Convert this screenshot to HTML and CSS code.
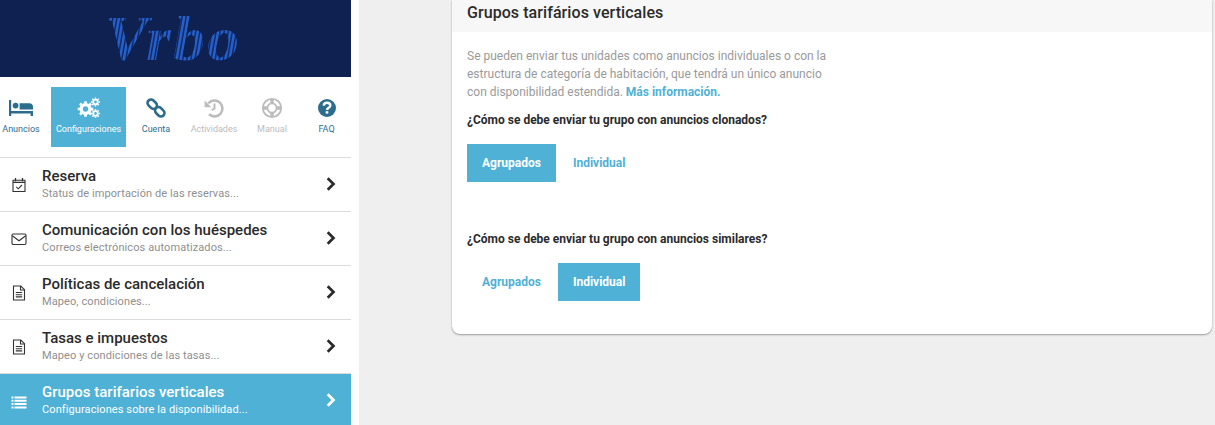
FILE: index.html
```html
<!DOCTYPE html>
<html lang="es">
<head>
<meta charset="utf-8">
<title>Grupos tarifarios verticales</title>
<link rel="stylesheet" href="styles.css">
</head>
<body>
<div class="app">
  <aside class="sidebar">
    <div class="brand"><span class="brand-logo">Vrbo</span></div>
    <nav class="tabs">
      <a class="tab tab-anuncios">
        <svg class="tab-icon" width="26" height="20" viewBox="0 0 26 20"><path fill="currentColor" d="M1 2h2.200v11H25v5h-2.400v-2.600H3.200V18H1z"/><circle cx="7.600" cy="7.600" r="2.900" fill="currentColor"/><path fill="currentColor" d="M11.600 5.200h9.600a3.800 3.800 0 0 1 3.800 3.800v2.600H11.600z"/></svg>
        <span>Anuncios</span>
      </a>
      <a class="tab tab-config active">
        <svg class="tab-icon" width="24" height="22" viewBox="0 0 24 22" fill="none" stroke="currentColor"><circle cx="8.500" cy="12" r="4.400" stroke-width="3.400"/><path stroke-width="2.600" d="M8.500 4.200v2.200M8.500 17.600v2.200M.7 12h2.200M14.100 12h2.200M3 6.500l1.600 1.600M12.400 15.900l1.600 1.600M3 17.500l1.600-1.600M12.400 8.100L14 6.500"/><circle cx="18.500" cy="5" r="2.300" stroke-width="1.800"/><path stroke-width="1.500" d="M18.500.4v1.400M18.500 8.200v1.400M13.900 5h1.400M21.700 5h1.400M15.300 1.800l1 1M20.700 7.200l1 1M15.300 8.200l1-1M20.700 2.800l1-1"/><circle cx="18.500" cy="16.500" r="2.300" stroke-width="1.800"/><path stroke-width="1.500" d="M18.500 11.900v1.400M18.500 19.700v1.400M13.900 16.500h1.400M21.700 16.500h1.400M15.300 13.300l1 1M20.700 18.700l1 1M15.300 19.700l1-1M20.700 14.300l1-1"/></svg>
        <span>Configuraciones</span>
      </a>
      <a class="tab tab-cuenta">
        <svg class="tab-icon" width="22" height="22" viewBox="0 0 22 22" fill="none" stroke="currentColor" stroke-width="2.600"><rect x="2" y="3.700" width="10.500" height="7" rx="3.500" transform="rotate(45 7.250 7.200)"/><rect x="9.500" y="11.300" width="10.500" height="7" rx="3.500" transform="rotate(45 14.750 14.800)"/></svg>
        <span>Cuenta</span>
      </a>
      <a class="tab tab-actividades muted">
        <svg class="tab-icon" width="20" height="20" viewBox="0 0 20 20" fill="none" stroke="currentColor" stroke-width="2.600"><path d="M4.300 5.300A8 8 0 1 1 5 16.300"/><path d="M10.500 5.500v5l-2.800 1.600" stroke-width="2"/><path fill="currentColor" stroke="none" d="M.6 2.400v6.800h6.800z"/></svg>
        <span>Actividades</span>
      </a>
      <a class="tab tab-manual muted">
        <svg class="tab-icon" width="22" height="22" viewBox="0 0 22 22" fill="none" stroke="currentColor"><circle cx="11" cy="11" r="9.200" stroke-width="1.800"/><circle cx="11" cy="11" r="4.600" stroke-width="1.800"/><path stroke-width="3.400" d="M11 2v4.500M11 15.500V20M2 11h4.500M15.500 11H20"/></svg>
        <span>Manual</span>
      </a>
      <a class="tab tab-faq">
        <svg class="tab-icon" width="20" height="20" viewBox="0 0 20 20"><circle cx="10" cy="10" r="9" fill="currentColor"/><path fill="none" stroke="#fff" stroke-width="2.400" d="M6.700 7.600C6.900 5.600 8.300 4.700 10 4.700c2 0 3.300 1.100 3.300 2.700 0 2.400-3.300 2.300-3.300 4.700"/><rect x="8.700" y="13.200" width="2.600" height="2.400" fill="#fff"/></svg>
        <span>FAQ</span>
      </a>
    </nav>
    <ul class="menu">
      <li class="menu-item">
        <svg class="menu-icon" width="16" height="16" viewBox="0 0 16 16" fill="none" stroke="currentColor" stroke-width="1.100"><path d="M2 3.200h12v11.300H2z"/><path d="M4.500 1v3.300M11.500 1v3.300M2 5.400h12" stroke-width="1.300"/><path d="M5.300 9.800l2 2 3.600-3.800"/></svg>
        <div class="menu-text"><div class="menu-title">Reserva</div><div class="menu-sub">Status de importación de las reservas...</div></div>
        <svg class="chevron" width="10" height="14" viewBox="0 0 10 14"><path fill="none" stroke="currentColor" stroke-width="2.700" d="M1.700 1.200 7.500 7l-5.800 5.800"/></svg>
      </li>
      <li class="menu-item">
        <svg class="menu-icon" width="16" height="16" viewBox="0 0 16 16" fill="none" stroke="currentColor" stroke-width="1.100"><rect x="1" y="3" width="14" height="10.500" rx="1.200"/><path d="M1.300 4.800 8 9.800l6.700-5"/></svg>
        <div class="menu-text"><div class="menu-title">Comunicación con los huéspedes</div><div class="menu-sub">Correos electrónicos automatizados...</div></div>
        <svg class="chevron" width="10" height="14" viewBox="0 0 10 14"><path fill="none" stroke="currentColor" stroke-width="2.700" d="M1.700 1.200 7.500 7l-5.800 5.800"/></svg>
      </li>
      <li class="menu-item">
        <svg class="menu-icon" width="16" height="16" viewBox="0 0 16 16" fill="none" stroke="currentColor" stroke-width="1.100"><path d="M2.500 1h7.300l3.700 3.700v10.300h-11z"/><path d="M9.500 1v4h4M4.800 7.500h6.400M4.800 9.700h6.400M4.800 11.900h6.400"/></svg>
        <div class="menu-text"><div class="menu-title">Políticas de cancelación</div><div class="menu-sub">Mapeo, condiciones...</div></div>
        <svg class="chevron" width="10" height="14" viewBox="0 0 10 14"><path fill="none" stroke="currentColor" stroke-width="2.700" d="M1.700 1.200 7.500 7l-5.800 5.800"/></svg>
      </li>
      <li class="menu-item">
        <svg class="menu-icon" width="16" height="16" viewBox="0 0 16 16" fill="none" stroke="currentColor" stroke-width="1.100"><path d="M2.500 1h7.300l3.700 3.700v10.300h-11z"/><path d="M9.500 1v4h4M4.800 7.500h6.400M4.800 9.700h6.400M4.800 11.900h6.400"/></svg>
        <div class="menu-text"><div class="menu-title">Tasas e impuestos</div><div class="menu-sub">Mapeo y condiciones de las tasas...</div></div>
        <svg class="chevron" width="10" height="14" viewBox="0 0 10 14"><path fill="none" stroke="currentColor" stroke-width="2.700" d="M1.700 1.200 7.500 7l-5.800 5.800"/></svg>
      </li>
      <li class="menu-item selected">
        <svg class="menu-icon" width="16" height="16" viewBox="0 0 16 16" fill="currentColor"><path d="M.5 2.500h2v2h-2zM3.500 2.500h12v2h-12zM.5 5.800h2v2h-2zM3.500 5.800h12v2h-12zM.5 9.100h2v2h-2zM3.500 9.100h12v2h-12zM.5 12.400h2v2h-2zM3.500 12.400h12v2h-12z"/></svg>
        <div class="menu-text"><div class="menu-title">Grupos tarifarios verticales</div><div class="menu-sub">Configuraciones sobre la disponibilidad...</div></div>
        <svg class="chevron" width="10" height="14" viewBox="0 0 10 14"><path fill="none" stroke="currentColor" stroke-width="2.700" d="M1.700 1.200 7.500 7l-5.800 5.800"/></svg>
      </li>
    </ul>
  </aside>
  <main class="content">
    <section class="card">
      <header class="card-header">Grupos tarifários verticales</header>
      <div class="card-body">
        <p class="intro">Se pueden enviar tus unidades como anuncios individuales o con la estructura de categoría de habitación, que tendrá un único anuncio con disponibilidad estendida. <a class="more">Más información.</a></p>
        <div class="question">¿Cómo se debe enviar tu grupo con anuncios clonados?</div>
        <div class="choices">
          <button class="choice on">Agrupados</button>
          <button class="choice">Individual</button>
        </div>
        <div class="question second">¿Cómo se debe enviar tu grupo con anuncios similares?</div>
        <div class="choices">
          <button class="choice">Agrupados</button>
          <button class="choice on">Individual</button>
        </div>
      </div>
    </section>
  </main>
</div>
</body>
</html>
```
FILE: styles.css
```css
* { box-sizing: border-box; }
html, body { margin: 0; height: 100%; overflow: hidden; }
body { font-family: Roboto, "Liberation Sans", sans-serif; background: #efefef; color: #2b2b2b; }
.app { display: flex; height: 425px; }

.sidebar { width: 359px; flex: none; background: #fff; padding-right: 8px; height: 425px; overflow: hidden; }
.brand { height: 77px; background: #0e2151; display: flex; align-items: center; justify-content: center; padding-right: 5px; }
.brand-logo {
  font: italic 700 64px/66px "Liberation Serif", serif;
  letter-spacing: 2px;
  width: 146px;
  text-align: center;
  background: repeating-linear-gradient(100deg, #2560c8 0, #2560c8 1.5px, #12296a 2.5px, #12296a 3px, #2560c8 4px);
  -webkit-background-clip: text;
  background-clip: text;
  color: transparent;
}

.tabs { height: 81px; border-bottom: 1px solid #dcdcdc; display: flex; align-items: flex-start; padding-top: 10px; }
.tab { height: 60px; display: flex; flex-direction: column; align-items: center; color: #2c6d8e; font-size: 9px; font-weight: 400; white-space: nowrap; }
.tab-icon { height: 22px; margin-top: 10px; margin-bottom: 5px; flex: none; }
.tab-anuncios { width: 51px; padding-right: 9px; }
.tab-config { width: 75px; }
.tab-cuenta { width: 60px; }
.tab-actividades { width: 56px; }
.tab-manual { width: 60px; }
.tab-faq { width: 49px; }
.tab.active { background: #4fb1d6; color: #fff; }
.tab.muted { color: #bcbcbc; }

.menu { list-style: none; margin: 0; padding: 0; }
.menu-item { height: 54px; border-bottom: 1px solid #dcdcdc; display: flex; align-items: center; padding: 0 15px 0 11px; color: #2b2b2b; }
.menu-icon { flex: none; margin-right: 15px; margin-top: 1px; color: #333; }
.menu-text { flex: 1; min-width: 0; padding-bottom: 2px; }
.menu-title { font-size: 15px; font-weight: 500; line-height: 18px; }
.menu-sub { font-size: 11px; line-height: 14px; color: #8f8f8f; margin-top: 2px; letter-spacing: .1px; }
.chevron { flex: none; color: #2b2b2b; margin-bottom: 2px; }
.menu-item.selected { background: #4fb1d6; color: #fff; border-bottom: 0; }
.menu-item.selected .menu-icon, .menu-item.selected .menu-sub, .menu-item.selected .chevron { color: #fff; }

.content { flex: 1; min-width: 0; padding: 0 3px 0 93px; }
.card { background: #fff; border-radius: 0 0 8px 8px; box-shadow: 0 1px 2px rgba(0,0,0,.35), 0 0 1px rgba(0,0,0,.15); height: 334px; }
.card-header { height: 32px; background: #f7f7f7; padding: 3px 15px 0; font-size: 16px; font-weight: 500; line-height: 20px; letter-spacing: .07px; color: #2b2b2b; }
.card-body { padding: 15px 15px 0; }
.intro { margin: 0; width: 370px; font-size: 12px; line-height: 18px; color: #9a9a9a; }
.more { color: #4fb1d6; font-weight: 700; }
.question { font-size: 12px; font-weight: 700; line-height: 14px; color: #2b2b2b; margin-top: 12px; }
.question.second { margin-top: 50px; }
.choices { display: flex; gap: 2px; margin-top: 17px; }
.choice { height: 38px; padding: 0 15px; border: 0; background: transparent; color: #4fb1d6; font: 700 12px Roboto, sans-serif; }
.choice.on { background: #4fb1d6; color: #fff; }
```
